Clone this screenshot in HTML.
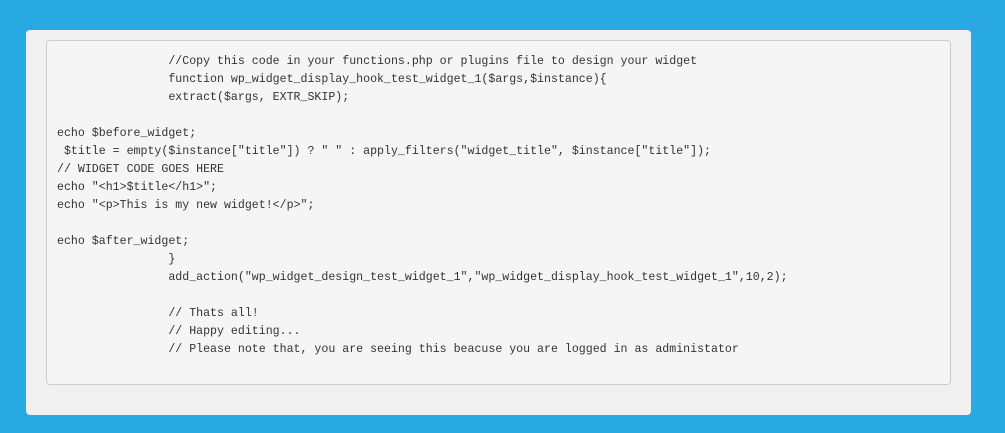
<!DOCTYPE html>
<html><head><style>
body{margin:0;background:#29a9e1;width:1005px;height:433px;overflow:hidden}
.panel{position:absolute;left:26px;top:30px;width:945px;height:385px;background:#f0f0f0;border-radius:4px}
pre{position:absolute;left:46px;top:40px;width:884px;height:322px;margin:0;padding:12px 9px 9px 10px;background:#f5f5f5;border:1px solid #ccc;border-radius:4px;font-family:"Liberation Mono",monospace;font-size:11.6px;line-height:18px;color:#333;white-space:pre}
</style></head><body>
<div class="panel"></div>
<pre>                //Copy this code in your functions.php or plugins file to design your widget
                function wp_widget_display_hook_test_widget_1($args,$instance){
                extract($args, EXTR_SKIP);

echo $before_widget;
 $title = empty($instance["title"]) ? " " : apply_filters("widget_title", $instance["title"]);
// WIDGET CODE GOES HERE
echo "&lt;h1&gt;$title&lt;/h1&gt;";
echo "&lt;p&gt;This is my new widget!&lt;/p&gt;";

echo $after_widget;
                }
                add_action("wp_widget_design_test_widget_1","wp_widget_display_hook_test_widget_1",10,2);

                // Thats all!
                // Happy editing...
                // Please note that, you are seeing this beacuse you are logged in as administator</pre>
</body></html>
